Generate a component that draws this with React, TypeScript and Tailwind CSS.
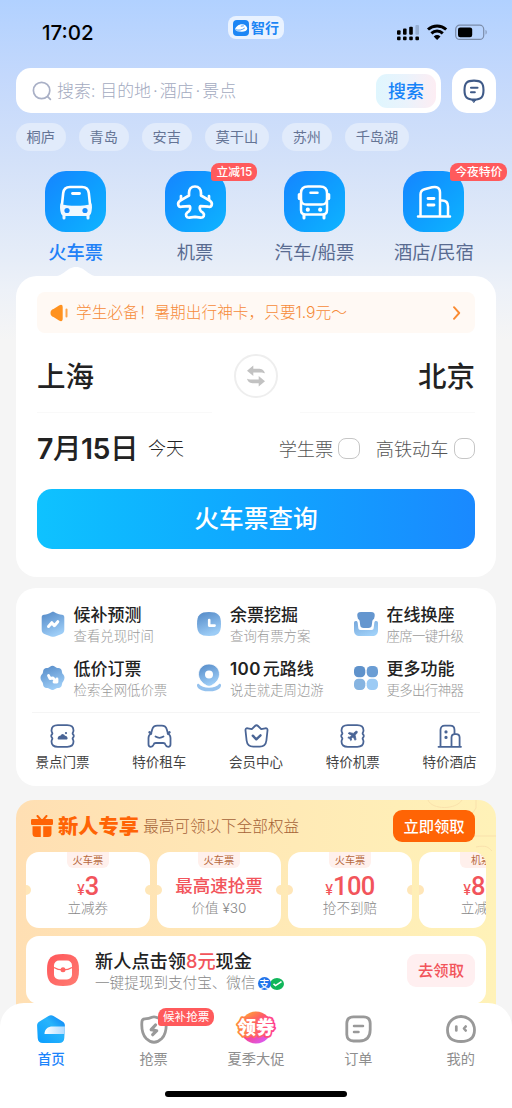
import type { ReactNode } from "react";

const CITIES = ["桐庐", "青岛", "安吉", "莫干山", "苏州", "千岛湖"];

function StatusBar() {
  return (
    <div className="flex h-[68px] shrink-0 justify-between pl-[42px] pr-[24px]">
      <div className="w-[80px] pt-[21px] text-[20.5px] font-medium leading-6 text-black">17:02</div>
      <div className="mt-4 flex h-[23px] w-[56px] -translate-x-[2px] items-center justify-center gap-[2px] rounded-[8px] bg-[#e9f2ff]">
        <svg width="16" height="16" viewBox="0 0 16 16">
          <rect width="16" height="16" rx="4" fill="#1c86f5" />
          <path d="M2 9.3C3 6.3 6 4.1 9 4.2c3 .1 5 1.8 5.3 4.4-.3 2.2-2.6 3.1-5.6 3.1-3.5 0-5.8-.4-6.7-2.4Z" fill="#fff" />
          <path d="M2.500 9.700c3 1 6.800.3 9.300-1.700M7.800 6.200l3-.4" stroke="#1c86f5" strokeWidth=".8" fill="none" />
        </svg>
        <span className="text-[14px] font-bold leading-4 text-[#1c86f5]">智行</span>
      </div>
      <div className="flex w-[94px] items-start pt-[24px]">
        <svg width="94" height="18" viewBox="0 0 94 18">
          <g fill="#000">
            <rect x="3" y="6.3" width="3.6" height="4.4" rx="1" />
            <rect x="9" y="4.6" width="3.6" height="6.1" rx="1" />
            <rect x="15.2" y="2.8" width="3.6" height="7.9" rx="1" />
            <rect x="3" y="12.6" width="3.6" height="3.7" rx="1" />
            <rect x="9" y="12.6" width="3.6" height="3.7" rx="1" />
            <rect x="15.2" y="12.6" width="3.6" height="3.7" rx="1" />
            <rect x="21.4" y="12.6" width="3.6" height="3.7" rx="1" />
          </g>
          <rect x="21.4" y="1" width="3.6" height="9.7" rx="1" fill="#96afd3" />
          <g fill="none" stroke="#000" strokeWidth="3">
            <path d="M34 5.500a13.600 13.600 0 0 1 18.200 0" />
            <path d="M37.400 9.300a8.500 8.500 0 0 1 11.400 0" />
          </g>
          <path d="M39.700 12.400a5.200 5.200 0 0 1 6.800 0L43.100 16Z" fill="#000" />
          <rect x="61.7" y="1.2" width="28" height="14.2" rx="4" fill="none" stroke="#7b8ca9" strokeWidth="1.2" />
          <rect x="64" y="3.4" width="14.2" height="9.8" rx="2.2" fill="#000" />
          <path d="M91.600 6v4.600c1.400-.4 1.400-4.200 0-4.600Z" fill="#7b8ca9" />
        </svg>
      </div>
    </div>
  );
}

function SearchRow() {
  return (
    <div className="flex h-[45px] shrink-0 gap-[11px] px-4">
      <div className="flex w-[425px] items-center rounded-[15px] bg-white pl-4 pr-[5px]">
        <svg width="20" height="20" viewBox="0 0 20 20" fill="none" stroke="#a9b0c6" strokeWidth="1.7" strokeLinecap="round">
          <circle cx="9.6" cy="9.5" r="8.2" />
          <path d="m15.600 15.600 2.800 2.800" />
        </svg>
        <span className="ml-[5px] flex-1 whitespace-pre text-[16.900px] font-light leading-6 text-[#a3aac0]">
          搜索: 目的地<span className="mx-[2px]">·</span>酒店<span className="mx-[2px]">·</span>景点
        </span>
        <button className="h-[34px] w-[60px] rounded-[11px] bg-linear-to-r from-[#dff6fe] via-[#eaf3fc] to-[#fdedf3] text-[18px] font-medium leading-[36px] text-[#1783f8]">搜索</button>
      </div>
      <button className="flex h-[45px] w-[44px] items-center justify-center rounded-[15px] bg-white">
        <svg width="24" height="26" viewBox="0 0 24 26" fill="none" stroke="#3f5a88" strokeWidth="2.1" strokeLinecap="round">
          <path d="M12 2.600c7.200 0 9.500 2.300 9.500 9.500s-2.300 9.500-9.500 9.500-9.500-2.300-9.500-9.500S4.800 2.600 12 2.600Z" />
          <path d="M10.300 22h3.400L12 24.300Z" fill="#3f5a88" strokeWidth="1" />
          <path d="M9 9.800h6.500M9 14.300h3.800" />
        </svg>
      </button>
    </div>
  );
}

function TrainIcon() {
  return (
    <svg width="36" height="38" viewBox="0 0 36 38">
      <path d="M12 4h12c4.500 0 6.300 1.800 6.800 6l1.500 14H3.700L5.200 10C5.700 5.800 7.500 4 12 4Z" fill="none" stroke="#fff" strokeWidth="2.600" />
      <path d="M2.500 20.500c6.500 3.500 24.500 3.500 31 0 .6 3.500.5 6-.1 8.500-.6 3-2 4-4.800 4H7.400c-2.800 0-4.200-1-4.800-4-.6-2.500-.7-5-.1-8.500Z" fill="#f0f8ff" />
      <path d="M6 31v4M30 31v4" stroke="#f0f8ff" strokeWidth="3" strokeLinecap="round" />
      <path d="M14.500 10.500h7" stroke="#fff" strokeWidth="2.800" strokeLinecap="round" />
      <circle cx="9" cy="27.500" r="2.600" fill="#168cff" />
      <circle cx="27" cy="27.500" r="2.600" fill="#168cff" />
    </svg>
  );
}

function PlaneIcon() {
  return (
    <svg width="38" height="38" viewBox="0 0 38 38" fill="none" stroke="#fff" strokeWidth="2.700" strokeLinecap="round" strokeLinejoin="round">
      <path d="M19 3.500c-4 0-6 2.900-6 6.500v2.500L4.200 17.600c-3.400 2.300-2.300 6.900 1.500 6.100l7.600-.5c1.200.2 1.300 3.500-.3 5l-2 1.600c-2.200 2.200-.6 4.900 2.200 4.900l5.800-.9 5.800.9c2.800 0 4.400-2.700 2.200-4.900l-2-1.600c-1.600-1.500-1.500-4.800-.3-5l7.600.5c3.800.8 4.900-3.800 1.500-6.100L25 12.500V10c0-3.600-2-6.500-6-6.500Z" />
      <path d="M5 13v4M33 13v4" />
    </svg>
  );
}

function BusIcon() {
  return (
    <svg width="36" height="38" viewBox="0 0 36 38" fill="none" stroke="#fff" strokeWidth="2.500" strokeLinecap="round">
      <path d="M12 3.500h12c4.500 0 7 2 7 6.500v17c0 3-1.500 4.500-4.500 4.500h-17c-3 0-4.500-1.500-4.500-4.500V10c0-4.500 2.500-6.500 7-6.500Z" />
      <path d="M5 17c.3 3.500 2 4.500 5.500 4.500h15c3.500 0 5.200-1 5.500-4.500M14.500 9.800h7" />
      <path d="M3.300 11.500v4M32.700 11.500v4" strokeWidth="3.200" />
      <path d="M8 32v3M28 32v3" strokeWidth="3" />
      <circle cx="11.800" cy="26.700" r="2.100" fill="#fff" stroke="none" />
      <circle cx="24.200" cy="26.700" r="2.100" fill="#fff" stroke="none" />
    </svg>
  );
}

function HotelIcon() {
  return (
    <svg width="36" height="38" viewBox="0 0 36 38" fill="none" stroke="#fff" strokeWidth="2.500" strokeLinecap="round" strokeLinejoin="round">
      <path d="M2 33.600h32M4.500 33V11.500c0-3 1.300-4.400 4-5.200l7.500-2c5-1.300 8 .7 8 5.200V33M24 17.500h2c4 0 6 2 6 6V33" />
      <path d="M12 15.500h6M12 22h6" strokeWidth="2.800" />
    </svg>
  );
}

function Category({ label, icon, badge, active }: { label: string; icon: ReactNode; badge?: string; active?: boolean }) {
  return (
    <div className="relative flex w-[119.400px] flex-col items-center">
      <div className="flex h-[61px] w-[61px] items-center justify-center rounded-[21px] bg-linear-to-br from-[#1684ff] to-[#10b4ff]">{icon}</div>
      {badge && (
        <span className="absolute left-[76px] top-[-8px] flex h-[18px] items-center whitespace-nowrap rounded-[8px] rounded-bl-[3px] bg-[#ff5a5c] px-[5px] pt-px text-[11.800px] font-medium leading-none text-white">
          {badge}
        </span>
      )}
      <span className={`mt-[7px] whitespace-nowrap text-[18.300px] leading-[26px] ${active ? "font-medium text-[#2080f7]" : "text-[#596b91]"}`}>{label}</span>
    </div>
  );
}

function Checkbox({ label }: { label: string }) {
  return (
    <label className="flex items-center">
      <span className="text-[18.200px] font-light leading-7 text-[#555]">{label}</span>
      <span className="ml-[5px] h-[21.500px] w-[21.500px] rounded-[8px] border-[1.500px] border-[#c6c6c6]" />
    </label>
  );
}

function BookingCard() {
  return (
    <section className="relative mx-4 flex h-[301px] shrink-0 flex-col rounded-[21px] bg-white px-[21px]">
      <svg className="absolute left-[34px] top-[-9px]" width="52" height="10" viewBox="0 0 52 10">
        <path d="M0 10C15 10 16 0 26 0s11 10 26 10Z" fill="#fff" />
      </svg>
      <div className="mt-4 flex h-[41px] items-center rounded-[8px] bg-[#fff9f4] pl-[13px] pr-[13px]">
        <svg width="19" height="18" viewBox="0 0 19 18">
          <path d="M3.500 5 9 1.500c2.300-1.400 3.700-.7 3.700 1.700v11.600c0 2.400-1.400 3.100-3.700 1.700L3.500 13C-.5 12.500-.5 5.500 3.500 5Z" fill="#ff921f" />
          <path d="M16.500 5.500v7" stroke="#ffa64b" strokeWidth="2" strokeLinecap="round" />
        </svg>
        <span className="ml-[7px] flex-1 whitespace-nowrap text-[15.700px] font-light leading-6 text-[#f68b39]">学生必备！暑期出行神卡，只要1.9元～</span>
        <svg width="10" height="14" viewBox="0 0 10 14" fill="none" stroke="#fa8b32" strokeWidth="1.900" strokeLinecap="round" strokeLinejoin="round">
          <path d="M2 1.200 7.200 7 2 12.800" />
        </svg>
      </div>
      <div className="flex h-[79px] items-center justify-between pt-[6px] text-[28.500px] font-medium text-[#222]">
        <span className="w-[100px] pt-[2px] leading-9">上海</span>
        <span className="flex h-[44px] w-[44px] items-center justify-center rounded-full border-2 border-[#eee]">
          <svg width="20" height="22" viewBox="0 0 20 22">
            <path d="m1 5.800 6.300-5.300v3.200H12c4 0 6 1.300 7 4.600-2-.9-4-.9-6-.9H7.300v3.700Z" fill="#c2c2c2" />
            <path d="m19 16.200-6.300 5.300v-3.200H8c-4 0-6-1.300-7-4.600 2 .9 4 .9 6 .9h5.700v-3.700Z" fill="#c2c2c2" />
          </svg>
        </span>
        <span className="w-[100px] pt-[2px] text-right leading-9">北京</span>
      </div>
      <div className="flex h-px justify-between">
        <i className="w-[175px] bg-[#f9f9f9]" />
        <i className="w-[175px] bg-[#f9f9f9]" />
      </div>
      <div className="flex h-[75.500px] items-center pb-[4.500px]">
        <span className="whitespace-nowrap text-[28.500px] font-medium leading-9 tracking-[-0.500px] text-[#222]">
          <b className="font-semibold">7</b>月<b className="font-semibold">15</b>日
        </span>
        <span className="ml-[10px] text-[18px] font-light leading-7 text-[#222]">今天</span>
        <div className="ml-auto flex gap-[16px]">
          <Checkbox label="学生票" />
          <Checkbox label="高铁动车" />
        </div>
      </div>
      <button className="h-[60px] rounded-[15px] bg-linear-to-r from-[#0fc2ff] to-[#1a89ff] text-[24.700px] font-medium leading-[60px] text-white">火车票查询</button>
    </section>
  );
}

function ShieldPulse() {
  return (
    <svg width="24" height="26" viewBox="0 0 24 26">
      <path d="M10.500 1.200c1-.500 2-.500 3 0 2.500 1.500 5 2.200 7.500 2.600 1.500.2 2.300 1.100 2.300 2.600v12c0 2.500-1 4-3.300 4.800l-6 2.200c-1.400.5-2.600.5-4 0l-6-2.200C1.700 22.400.7 20.900.7 18.400v-12c0-1.500.8-2.400 2.300-2.600 2.500-.4 5-1.100 7.500-2.600Z" fill="url(#blue)" />
      <path d="m7.500 15.500 3.300-3.800 2.600 3 3.400-4" fill="none" stroke="#fff" strokeWidth="3" strokeLinejoin="round" strokeLinecap="round" />
    </svg>
  );
}
function ClockBox() {
  return (
    <svg width="24" height="24" viewBox="0 0 24 24">
      <path d="M12 0c9 0 12 3 12 12s-3 12-12 12S0 21 0 12 3 0 12 0Z" fill="url(#blue)" />
      <path d="M12.200 8v5.600h5.400" fill="none" stroke="#fff" strokeWidth="2.600" strokeLinecap="round" strokeLinejoin="round" />
    </svg>
  );
}
function SeatIcon() {
  return (
    <svg width="24" height="24" viewBox="0 0 24 24">
      <path d="M7 0h10c3 0 4 1.500 3.700 4l-.7 3c-1.300.5-1.700 1.500-1.800 3l-.4 3c-.3 2.300-1.200 3-3.500 3H9.700c-2.300 0-3.200-.7-3.500-3l-.4-3C5.700 8.500 5.300 7.500 4 7l-.7-3C3 1.500 4 0 7 0Z" fill="#6496cf" />
      <path d="M1.800 9C3 9 3.500 9.600 3.700 11l.6 5c.2 1.300.7 1.900 2.200 1.900h11c1.500 0 2-.6 2.200-1.900l.6-5c.2-1.400.7-2 1.900-2s1.800.8 1.800 2v7c0 4-2 6-6 6H6c-4 0-6-2-6-6v-7c0-1.200.6-2 1.800-2Z" fill="url(#blueSoft)" />
    </svg>
  );
}
function SealDown() {
  return (
    <svg width="25" height="26" viewBox="0 0 25 26">
      <path d="M10 1.700c1.500-1.300 3.500-1.300 5 0 1 .9 2 1.200 3.300 1.200 2 0 3.500 1.500 3.600 3.500.1 1.200.5 2.200 1.400 3.200 1.600 1.900 1.600 4.700 0 6.600-.9 1-1.300 2-1.400 3.200-.1 2-1.600 3.500-3.600 3.500-1.300 0-2.300.3-3.300 1.200-1.500 1.300-3.500 1.300-5 0-1-.9-2-1.200-3.300-1.200-2 0-3.500-1.500-3.600-3.500C3 18.200 2.600 17.200 1.700 16.200c-1.600-1.900-1.600-4.700 0-6.600.9-1 1.300-2 1.400-3.200.1-2 1.600-3.500 3.600-3.500C8 2.900 9 2.600 10 1.700Z" fill="url(#blue)" />
      <path d="m8.500 10.500 1.500 3 3-.5 3 3.500M17 14v3h-3" fill="none" stroke="#fff" strokeWidth="2.800" strokeLinejoin="round" strokeLinecap="round" />
    </svg>
  );
}
function PinIcon() {
  return (
    <svg width="24" height="28" viewBox="0 0 24 28">
      <path d="M1.600 19.700C5.500 25 18.500 25 22.400 19.700c1.500 0 2 1.300 1.400 2.700C21 29 3 29 .2 22.400c-.6-1.400-.1-2.700 1.400-2.700Z" fill="#95c2ee" />
      <path d="M12 0c6 0 10.500 4.500 10.500 10.200 0 5-3.500 8.800-8 11.300-1.800 1-3.200 1-5 0-4.500-2.500-8-6.300-8-11.300C1.500 4.500 6 0 12 0Z" fill="url(#blue)" stroke="#fff" strokeWidth=".8" />
      <circle cx="12" cy="10.500" r="4" fill="#fff" />
    </svg>
  );
}
function CloverIcon() {
  return (
    <svg width="24" height="24" viewBox="0 0 24 24">
      <rect width="11.300" height="11.300" rx="4.500" fill="#5f92cb" />
      <rect x="12.700" width="11.300" height="11.300" rx="4.500" fill="#6a9dd4" />
      <rect y="12.700" width="11.300" height="11.300" rx="4.500" fill="#86b4e1" />
      <rect x="12.700" y="12.700" width="11.300" height="11.300" rx="4.500" fill="#9ccbf5" />
    </svg>
  );
}

function Frame() {
  return <path d="M8.800 2.200h9.400c4.200 0 6.300 1.700 6.300 5.300 0 1.500-.9 2-.9 3 0 .8 1.200 1.100 1.200 2.500s-1.200 1.700-1.200 2.500c0 1 .9 1.500.9 3 0 3.600-2.100 5.300-6.300 5.300H8.800c-4.200 0-6.300-1.700-6.300-5.300 0-1.500.9-2 .9-3 0-.8-1.200-1.100-1.200-2.500s1.200-1.700 1.200-2.500c0-1-.9-1.500-.9-3 0-3.600 2.100-5.300 6.300-5.300Z" />;
}

const STROKE = { fill: "none", stroke: "#4a6596", strokeWidth: 1.8, strokeLinecap: "round", strokeLinejoin: "round" } as const;

const SHORTCUTS: { label: string; icon: ReactNode }[] = [
  {
    label: "景点门票",
    icon: (
      <svg width="27" height="26" viewBox="0 0 27 26" {...STROKE}>
        <Frame />
        <path d="M9.500 15.500c.2-1.800 1.500-2.200 2.300-1.600.7-2.600 3-2.600 3.700 0 1.200-.5 2 .3 2.200 1.600Z" fill="#4a6596" />
        <path d="M17 10v.1" strokeWidth="2.200" />
      </svg>
    ),
  },
  {
    label: "特价租车",
    icon: (
      <svg width="27" height="26" viewBox="0 0 27 26" {...STROKE}>
        <path d="M5 10.800 6.200 6.500c.8-2.800 2.200-3.800 5-3.800h4.600c2.800 0 4.200 1 5 3.800L22 10.800c1.800.9 2.500 2.200 2.500 4.200v6.300c0 1.600-.8 2.500-2.300 2.500s-2.300-.8-2.700-2c-.4-1.400-1-1.800-2.300-1.800H9.800c-1.300 0-1.900.4-2.300 1.800-.4 1.200-1.200 2-2.700 2s-2.300-.9-2.300-2.500V15c0-2 .7-3.300 2.500-4.200Z" />
        <path d="M3.500 9.300 5 10.500M23.500 9.300 22 10.500" strokeWidth="2.400" />
        <path d="M9.500 13.500c2.300 1.500 5.700 1.500 8 0" />
      </svg>
    ),
  },
  {
    label: "会员中心",
    icon: (
      <svg width="27" height="26" viewBox="0 0 27 26" {...STROKE}>
        <path d="M8.800 6.200 12 3c1-1 2-1 3 0l3.200 3.200 4-.9c1.500-.3 2.500.6 2.300 2.200l-1.100 10c-.5 4-2.700 6.200-6.700 6.200h-6.400c-4 0-6.200-2.200-6.700-6.200l-1.100-10c-.2-1.600.8-2.500 2.300-2.200Z" />
        <path d="m9.800 12.700 3.500 3.600 4.200-4" strokeWidth="2.400" />
      </svg>
    ),
  },
  {
    label: "特价机票",
    icon: (
      <svg width="27" height="26" viewBox="0 0 27 26" {...STROKE}>
        <Frame />
        <path d="M17.900 8.400c.7.700.3 1.600-.5 2.400l-1.300 1.300.9 4.300-.9.900-2-3.500-1.800 1.700.2 1.500-.7.700-1-2-2-1 .7-.7 1.500.2 1.700-1.800-3.500-2 .9-.9 4.300.9 1.300-1.300c.8-.8 1.600-1.300 2.200-.7Z" fill="#4a6596" strokeWidth=".8" />
      </svg>
    ),
  },
  {
    label: "特价酒店",
    icon: (
      <svg width="27" height="26" viewBox="0 0 27 26" {...STROKE}>
        <path d="M2.500 23.800h22.500M4.500 23.500V7c0-2.800 1.500-4.300 4.300-4.300h5.400c2.800 0 4.300 1.500 4.300 4.300v4M15.500 23.500v-9c0-2.300 1-3.400 3.400-3.400h1.300c2.400 0 3.400 1.100 3.400 3.400v9" />
        <path d="M10 8.800v.1M10 14.300v.1" strokeWidth="3.200" />
      </svg>
    ),
  },
];

const FEATURES: { title: ReactNode; sub: string; icon: ReactNode; tight?: boolean }[] = [
  { title: "候补预测", sub: "查看兑现时间", icon: <ShieldPulse /> },
  { title: "余票挖掘", sub: "查询有票方案", icon: <ClockBox /> },
  { title: "在线换座", sub: "座席一键升级", icon: <SeatIcon />, tight: true },
  { title: "低价订票", sub: "检索全网低价票", icon: <SealDown /> },
  { title: <><span className="mr-[2px] font-semibold tracking-[0.400px]">100</span>元路线</>, sub: "说走就走周边游", icon: <PinIcon /> },
  { title: "更多功能", sub: "更多出行神器", icon: <CloverIcon />, tight: true },
];

function ToolsCard() {
  return (
    <section className="mx-4 mt-[11px] h-[198px] shrink-0 rounded-[20px] bg-white px-4 pt-4">
      <svg className="absolute" width="0" height="0">
        <linearGradient id="blue" x1="0" y1="0" x2=".4" y2="1">
          <stop stopColor="#5288c6" />
          <stop offset="1" stopColor="#9cccf6" />
        </linearGradient>
        <linearGradient id="blueSoft" x1="0" y1="0" x2=".6" y2="1">
          <stop stopColor="#75a6da" />
          <stop offset="1" stopColor="#9fd0f8" />
        </linearGradient>
      </svg>
      <div className="grid h-[108px] grid-cols-[156.500px_156.500px_1fr] grid-rows-2 pl-2">
        {FEATURES.map((f) => (
          <div key={f.sub} className="flex">
            <div className="mt-[6px] flex h-[28px] w-[25px] items-center justify-center">{f.icon}</div>
            <div className="ml-[8.500px] whitespace-nowrap">
              <div className="h-[22px] text-[17px] font-medium leading-[23px] text-[#222]">{f.title}</div>
              <div className={`text-[13.400px] font-light leading-[21px] text-[#999] ${f.tight ? "tracking-[-0.600px]" : ""}`}>{f.sub}</div>
            </div>
          </div>
        ))}
      </div>
      <div className="h-px bg-[#f5f5f5]" />
      <div className="flex justify-between px-[3.500px] pt-[10px]">
        {SHORTCUTS.map((s) => (
          <div key={s.label} className="flex w-[54px] flex-col items-center">
            {s.icon}
            <span className="mt-[3px] whitespace-nowrap text-[13.500px] leading-5 text-[#444]">{s.label}</span>
          </div>
        ))}
      </div>
    </section>
  );
}

function Coupon({ tag, price, text, label }: { tag: string; price?: string; text?: string; label: string }) {
  return (
    <div className="relative flex h-[76px] w-[123.600px] shrink-0 flex-col items-center overflow-hidden rounded-[13px] bg-white">
      <i className="absolute left-[-5px] top-[33px] h-[10px] w-[10px] rounded-full bg-[#ffe6b8]" />
      <i className="absolute right-[-5px] top-[33px] h-[10px] w-[10px] rounded-full bg-[#ffe7b8]" />
      <span className="h-[16px] min-w-[42px] whitespace-nowrap rounded-b-[6px] bg-[#fff0ec] text-center text-[10.200px] leading-4 text-[#b7693f]">{tag}</span>
      {price ? (
        <span className="flex h-[30px] items-baseline font-medium leading-[37px] text-[#f2545b]">
          <span className="text-[14px]">¥</span>
          <span className="font-[Roboto] text-[25.500px] tracking-[-0.600px]">{price}</span>
        </span>
      ) : (
        <span className="h-[30px] whitespace-nowrap text-[17.500px] font-medium leading-[36px] text-[#f2545b]">{text}</span>
      )}
      <span className="whitespace-nowrap text-[13.600px] font-light leading-[20px] text-[#888]">{label}</span>
    </div>
  );
}

function NewUserCard() {
  return (
    <section className="relative mx-4 mt-[14px] h-[260px] shrink-0 overflow-hidden rounded-[18px] bg-linear-to-r from-[#ffdfb3] to-[#fff2b8] px-[10px]">
      <svg className="absolute right-0 top-0" width="90" height="60" viewBox="0 0 90 60" fill="none" stroke="#f9e1ac" strokeWidth="1">
        <path d="M22 0c4 10 28 10 34 0M70 0v8l-4 6M68 36h22M70 47c10-2 12 0 16 4" />
      </svg>
      <div className="relative flex h-[52px] items-center pl-[5px] pr-[11px]">
        <svg width="22" height="22" viewBox="0 0 22 22" fill="#ff6405">
          <rect x="0" y="4" width="22" height="6" rx="1.300" />
          <path d="M1.500 11.300h8.300V22H5c-2.400 0-3.500-1.100-3.500-3.500ZM12.200 11.300h8.300v7.200c0 2.400-1.100 3.500-3.500 3.500h-4.800Z" />
          <path d="m6.500 1 3 3.500M15.500 1l-3 3.500" stroke="#ff6405" strokeWidth="2" strokeLinecap="round" />
        </svg>
        <span className="ml-[5px] pt-[2px] text-[20.300px] font-black leading-7 text-[#ff6405]">新人专享</span>
        <span className="ml-[4px] pt-[2px] text-[15.600px] font-light leading-7 text-[#a66237]">最高可领以下全部权益</span>
        <button className="ml-auto h-[32px] w-[82px] rounded-[9px] bg-[#ff6405] text-[15.300px] font-medium leading-[33px] text-white">立即领取</button>
      </div>
      <div className="relative flex w-[460px] gap-[7.500px] overflow-hidden rounded-r-[13px]">
        <Coupon tag="火车票" price="3" label="立减券" />
        <Coupon tag="火车票" text="最高速抢票" label="价值 ¥30" />
        <Coupon tag="火车票" price="100" label="抢不到赔" />
        <Coupon tag="机票" price="80" label="立减券" />
      </div>
      <div className="relative mt-2 flex h-[68px] items-center rounded-[13px] bg-white pl-[21px] pr-[11px]">
        <svg width="32" height="32" viewBox="0 0 32 32">
          <linearGradient id="red" x1="0" y1="0" x2="1" y2="1">
            <stop stopColor="#ff565a" />
            <stop offset="1" stopColor="#ff7c72" />
          </linearGradient>
          <path d="M16 0c12 0 16 4 16 16s-4 16-16 16S0 28 0 16 4 0 16 0Z" fill="url(#red)" />
          <rect x="7" y="6.500" width="18" height="19" rx="5" fill="#fff" />
          <path d="M7 13.500c5 3.200 13 3.200 18 0" fill="none" stroke="#ff6664" strokeWidth="1.400" />
          <circle cx="16" cy="15.800" r="2.500" fill="#ff6664" />
        </svg>
        <div className="ml-4 whitespace-nowrap pt-[2px]">
          <div className="text-[18.200px] font-medium leading-[25px] text-[#222]">
            新人点击领<span className="text-[#f2545b]">8元</span>现金
          </div>
          <div className="flex items-center text-[14.600px] font-light leading-[19px] text-[#888]">
            一键提现到支付宝、微信
            <span className="z-10 ml-[2px] flex h-[13.500px] w-[13.500px] items-center justify-center rounded-full bg-[#2173ea] text-[10px] font-medium leading-none text-white">支</span>
            <svg className="-ml-px" width="14" height="12" viewBox="0 0 14 12">
              <ellipse cx="7" cy="6" rx="7" ry="6" fill="#10b65a" />
              <path d="m3.500 5.800 2 1.800 6-4" stroke="#fff" strokeWidth="1.600" fill="none" />
            </svg>
          </div>
        </div>
        <button className="ml-auto h-[33px] w-[68px] rounded-[9px] bg-[#ffeff0] text-[15.300px] font-medium leading-[34px] text-[#f2545b]">去领取</button>
      </div>
    </section>
  );
}

function Tab({ label, icon, active }: { label: string; icon: ReactNode; active?: boolean }) {
  return (
    <div className="flex w-[102.400px] flex-col items-center">
      <div className="flex h-[34px] items-center justify-center">{icon}</div>
      <span className={`mt-[3px] whitespace-nowrap leading-[20px] ${active ? "text-[13.500px] font-medium text-[#1c84fb]" : "text-[14.200px] text-[#8e8e8e]"}`}>{label}</span>
    </div>
  );
}

const GREY = { fill: "none", stroke: "#999", strokeWidth: 2.8, strokeLinecap: "round", strokeLinejoin: "round" } as const;

function TabBar() {
  return (
    <nav className="absolute bottom-0 left-0 flex h-[105px] w-full rounded-t-[24px] bg-white pt-[9px]">
      <Tab
        label="首页"
        active
        icon={
          <svg width="28" height="28" viewBox="0 0 28 28">
            <linearGradient id="home" x1="0" y1="1" x2="1" y2="0">
              <stop stopColor="#0a9dff" />
              <stop offset=".6" stopColor="#28b4fb" />
              <stop offset="1" stopColor="#087bf5" />
            </linearGradient>
            <linearGradient id="homeDoor">
              <stop stopColor="#fff" />
              <stop offset="1" stopColor="#acd9ff" />
            </linearGradient>
            <path d="M11.500 1c1.700-1.100 3.300-1.100 5 0L25.500 6.500c1.700 1 2.500 2.400 2.400 4.500l-.6 12c-.2 3.400-1.900 5-5.300 5H6c-3.400 0-5.100-1.600-5.300-5L.1 11c-.1-2.100.7-3.500 2.400-4.500Z" fill="url(#home)" />
            <path d="M7.500 19c0-5 3.500-7.500 8-7.500H28L27.500 19Z" fill="url(#homeDoor)" />
          </svg>
        }
      />
      <Tab
        label="抢票"
        icon={
          <svg width="28" height="29" viewBox="0 0 28 29" {...GREY}>
            <path d="M12 2.300c1.400-.7 2.600-.7 4 0 2.500 1.200 4.800 1.500 7.200 1.600 1.900.1 2.800 1 2.900 2.900.5 6.500.3 12-4.300 16.700-5.100 4.900-10.500 4.900-15.600 0C1.600 18.800 1.400 13.300 1.900 6.800c.1-1.900 1-2.800 2.900-2.900C7.200 3.800 9.500 3.500 12 2.300Z" />
            <path d="m15.500 10-4.300 4.700 5.500 1-4 4" strokeWidth="3.200" />
          </svg>
        }
      />
      <Tab
        label="夏季大促"
        icon={
          <svg className="-translate-y-[2px]" width="42" height="34" viewBox="0 0 42 34">
            <linearGradient id="promo" x1=".1" y1="0" x2=".8" y2="1">
              <stop stopColor="#ffb02e" />
              <stop offset=".5" stopColor="#ff3f77" />
              <stop offset="1" stopColor="#d65cff" />
            </linearGradient>
            <linearGradient id="promoEdge">
              <stop stopColor="#ff8a3c" />
              <stop offset="1" stopColor="#ff3f8f" />
            </linearGradient>
            <circle cx="21" cy="17.500" r="16" fill="url(#promo)" />
            <text x="21" y="24.300" textAnchor="middle" className="text-[18.500px] font-black" fill="#fff" stroke="url(#promoEdge)" strokeWidth="3.500" strokeLinejoin="round" paintOrder="stroke">
              领券
            </text>
          </svg>
        }
      />
      <Tab
        label="订单"
        icon={
          <svg width="27" height="28" viewBox="0 0 27 28" {...GREY}>
            <path d="M8.500 1.800h10c4.500 0 6.500 2 6.700 6.500v6.500c-.1 7.500-3.700 11.200-10.700 11.200h-6c-4.500 0-6.500-2-6.700-6.500V8.300c.2-4.500 2.200-6.500 6.700-6.500Z" />
            <path d="M9 11h9M9 17h4.500" strokeWidth="2.500" />
          </svg>
        }
      />
      <Tab
        label="我的"
        icon={
          <svg width="30" height="28" viewBox="0 0 30 28" {...GREY}>
            <path d="M15 1.500c8 0 13.500 6 13.500 13.500 0 8-5 11.500-13.500 11.500S1.500 23 1.500 15C1.500 7.500 7 1.500 15 1.500Z" />
            <path d="M10.300 11.500v4M19.700 11.500l-1.700 2 1.700 2" strokeWidth="2.700" />
          </svg>
        }
      />
      <span className="absolute left-[158px] top-[5px] flex h-[18px] items-center rounded-[8px] rounded-bl-[3px] bg-[#ff5a5c] px-[5px] pt-px text-[11.600px] leading-none text-white">候补抢票</span>
      <i className="absolute bottom-[11px] left-[165px] h-[6px] w-[182px] rounded-full bg-black" />
    </nav>
  );
}

export default function App() {
  return (
    <main className="relative flex h-[1108px] w-[512px] flex-col overflow-hidden bg-[#f5f5f5] bg-[linear-gradient(180deg,#b1d1ff_0px,#c3d8fc_75px,#d3e1f9_160px,#e6edf8_260px,#edf1f8_290px,#f5f5f5_340px)] font-[Inter,'Noto_Sans_CJK_SC',sans-serif]">
      <StatusBar />
      <SearchRow />
      <div className="mt-[10px] flex h-[28px] shrink-0 gap-[13.400px] px-4">
        {CITIES.map((c) => (
          <span key={c} className="rounded-full bg-[#e1ebfb] px-[10.600px] text-[14.200px] leading-[28px] text-[#657495]">
            {c}
          </span>
        ))}
      </div>
      <div className="mt-5 flex h-[105px] shrink-0 px-4">
        <Category label="火车票" icon={<TrainIcon />} active />
        <Category label="机票" icon={<PlaneIcon />} badge="立减15" />
        <Category label="汽车/船票" icon={<BusIcon />} />
        <Category label="酒店/民宿" icon={<HotelIcon />} badge="今夜特价" />
      </div>
      <BookingCard />
      <ToolsCard />
      <NewUserCard />
      <TabBar />
    </main>
  );
}
